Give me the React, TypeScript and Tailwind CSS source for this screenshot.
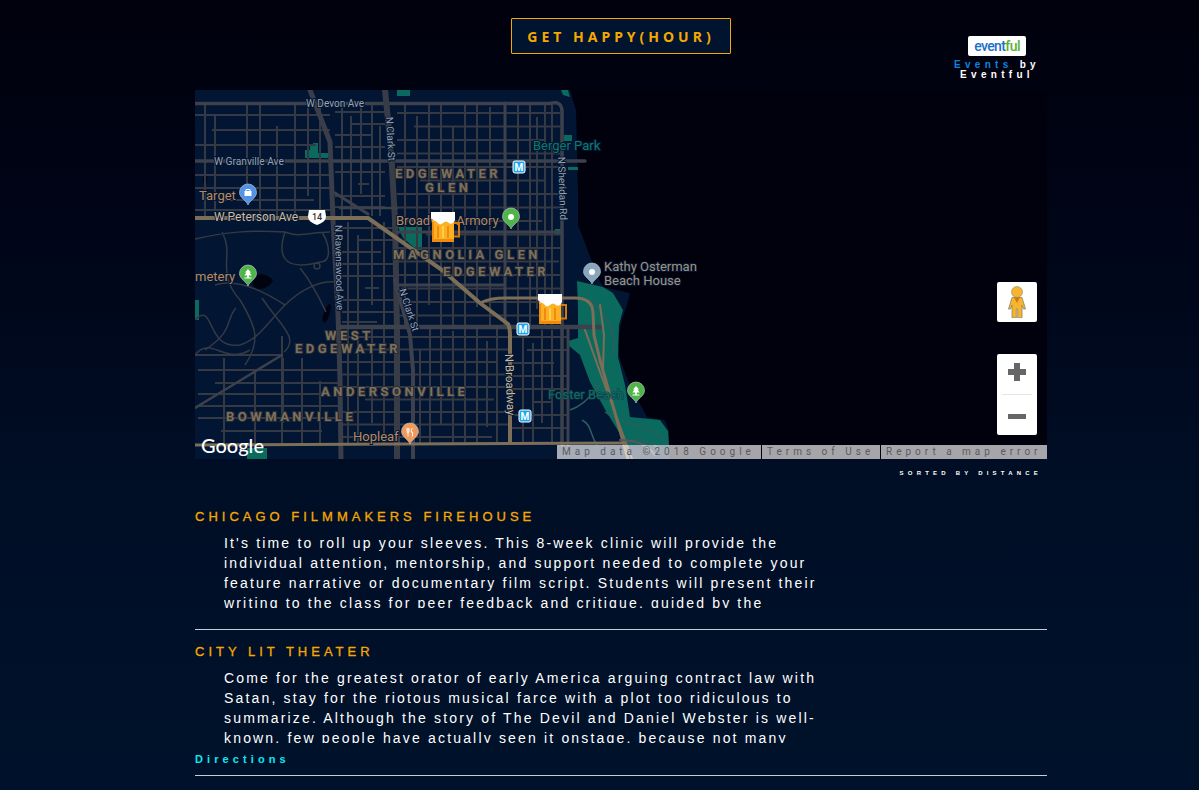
import React from "react";

const LAND = "#021533";
const ROAD = "#343944";
const MAJOR = "#3d414c";
const TAN = "#7d6e57";

function grid(xs: number[], ys: number[], x0: number, x1: number, y0: number, y1: number) {
  let d = "";
  xs.forEach((x, i) => {
    const a = i % 3 === 1 ? y0 + ((i * 13) % 29) : y0;
    const b = i % 4 === 2 ? y1 - ((i * 11) % 23) : y1;
    d += `M${x} ${a}V${b}`;
  });
  ys.forEach((y, j) => {
    const a = j % 4 === 1 ? x0 + ((j * 17) % 31) : x0;
    const b = j % 3 === 2 ? x1 - ((j * 7) % 19) : x1;
    d += `M${a} ${y}H${b}`;
  });
  return d;
}

const range = (a: number, b: number, s: number) => {
  const r: number[] = [];
  for (let v = a; v <= b; v += s) r.push(v);
  return r;
};

const minorPaths = [
  grid([205, 215, 247, 260, 277, 295, 308, 320], [115, 130, 145, 175, 188, 200, 210], 195, 330, 103, 216),
  grid([342, 351, 361, 372, 380], [112, 124, 135, 147, 172, 184, 196, 207], 335, 385, 103, 216),
  grid([405, 417, 429, 441, 453, 465, 477, 490, 518, 530, 537, 545, 552], range(113, 325, 13.5), 397, 560, 103, 327),
  grid([348, 358, 372, 384, 420, 430, 441, 453, 465, 477, 487, 497], range(337, 440, 12.5), 342, 510, 327, 445),
  grid([523, 533, 542, 552], range(337, 440, 13), 510, 568, 330, 445),
  grid([224, 255, 283, 302, 320], [370, 383, 394, 406, 418, 431], 198, 338, 358, 445),
  grid([348, 358, 372, 384], [228, 240, 252, 264, 276, 288, 300, 312, 322], 342, 395, 222, 327),
];

function Label({ x, y, children, size = 12, fill = "#a2927b", weight = 400, ls = 0, rotate, stroke = LAND, sw = 2 }: {
  x: number; y: number; children: React.ReactNode; size?: number; fill?: string; weight?: number; ls?: number; rotate?: number; stroke?: string; sw?: number;
}) {
  return (
    <text
      x={x}
      y={y}
      fontFamily="Roboto, sans-serif"
      fontSize={size}
      fontWeight={weight}
      letterSpacing={ls}
      fill={fill}
      stroke={stroke}
      strokeWidth={sw}
      paintOrder="stroke"
      transform={rotate ? `rotate(${rotate} ${x} ${y})` : undefined}
    >
      {children}
    </text>
  );
}

function Hood({ x, y, children }: { x: number; y: number; children: React.ReactNode }) {
  return <Label x={x} y={y} size={13} weight={700} ls={3.5} fill="#7f7058" stroke="#252b38">{children}</Label>;
}

function Pin({ x, y, fill, children }: { x: number; y: number; fill: string; children?: React.ReactNode }) {
  return (
    <g transform={`translate(${x} ${y})`}>
      <path d="M0 12C-1 8-8.5 5-8.5-.5a8.5 8.5 0 0 1 17 0C8.5 5 1 8 0 12Z" fill={fill} stroke="#b8c0c8" strokeWidth={0.7} />
      {children ?? <circle cx={0} cy={0} r={3} fill="#fff" />}
    </g>
  );
}

const Tree = () => <path d="M0-5 3-1.5H1.6L3.6 1.5H.8V3.5H3.5V4.5H-3.5V3.5H-.8V1.5H-3.6L-1.6-1.5H-3Z" fill="#fff" />;

function Metro({ x, y }: { x: number; y: number }) {
  return (
    <g>
      <rect x={x - 6} y={y - 6} width={12} height={12} rx={2} fill="#1aa7ee" stroke="#fff" strokeWidth={1} />
      <text x={x} y={y + 3.7} textAnchor="middle" fontFamily="Roboto, sans-serif" fontWeight={700} fontSize={10} fill="#fff">M</text>
    </g>
  );
}

function Beer({ x, y }: { x: number; y: number }) {
  return (
    <g transform={`translate(${x} ${y})`}>
      <path d="M23 11H28V24.5H23" fill="none" stroke="#d9780c" strokeWidth={2} />
      <rect x={1} y={8} width={22} height={22} fill="#fdb022" />
      <rect x={1} y={27} width={22} height={3} fill="#f08a10" />
      <rect x={1} y={10} width={2} height={20} fill="#f08a10" />
      <rect x={6} y={14} width={2} height={12} fill="#f08a10" />
      <rect x={11} y={14} width={2} height={12} fill="#ffd04a" />
      <rect x={16} y={14} width={2} height={12} fill="#f08a10" />
      <path d="M0 0H24V8C23 11 20 13 18 11 16 9 14 9 12 11 10 13 8 13 6 10 4 8 2 9 0 6Z" fill="#fff" />
    </g>
  );
}

function MapSvg() {
  return (
    <svg viewBox="195 90 852 369" width={852} height={369} className="block">
      <rect x={195} y={90} width={852} height={369} fill="#01010d" />
      <path
        d="M195 90H570L576 110 577 150 578 190 578 225 582 235 595 270 603 287 630 293 627 305 621 323 618 343 620 360 630 385 647 417 665 420 669 432 669 459H195Z"
        fill={LAND}
      />
      {/* parks */}
      <path
        d="M577 281 603 287 613 293 623 310 619 325 618 357 625 385 630 417 660 420 668 431 669 445 627 445 607 413 590 382 580 355 568 345 568 341 578 338 578 307Z"
        fill="#0a6a5e"
      />
      <path d="M305 158V150H310V146H313V143H318V153H328V158Z" fill="#0a6a5e" />
      <path d="M398 227H422V250L417 250 403 238Z" fill="#0a6a5e" />
      <path d="M397 90H410V96H397ZM561 90H568L570 97 563 95Z M564 135H572V141H564Z M568 167H578V170H568Z M555 229H561V234H555Z M195 300H199V320H195Z" fill="#0a6a5e" />
      <path d="M247 448H267V459H247Z" fill="#0a6a5e" />
      <path d="M203 178C205 173 208 174 207 180 206 186 203 186 203 178Z M252 276C262 272 268 275 273 280 270 288 258 292 253 286Z M328 305C333 300 331 315 326 322 320 325 322 314 328 305Z" fill="#000410" />

      {/* minor streets */}
      <g fill="none" stroke={ROAD} strokeWidth={2}>
        {minorPaths.map((d, i) => <path key={i} d={d} />)}
        {/* cemetery */}
        <path d="M195 239C225 232 250 230 285 232 300 238 310 232 330 232M222 232C235 255 215 272 240 300 255 325 262 340 245 365M285 232C275 262 290 270 320 262 332 262 330 245 322 232M195 320C215 300 205 350 240 345 258 340 268 322 285 305 300 290 320 280 336 282M195 355C210 335 225 365 250 350M262 298C280 325 300 338 284 352M215 285C235 278 262 290 285 305M236 308C225 320 235 330 205 350M300 268C310 280 318 295 326 312" strokeWidth={1.5} />
        <circle cx={317} cy={266} r={3} strokeWidth={1.5} />
        <path d="M195 355H282V358H282M282 336V445" />
        <path d="M590 300C612 320 618 340 612 355M605 412C622 425 650 425 664 440M625 445C640 435 650 440 660 450M582 420C592 425 590 435 597 445M570 410C585 405 590 395 600 385" stroke="#2f5c5e" strokeWidth={1.5} />
      </g>

      {/* arterials */}
      <g fill="none" stroke={MAJOR} strokeLinecap="round" strokeLinejoin="round">
        <path d="M195 103.5 H550Q562 100 562 112V445" strokeWidth={3.5} />
        <path d="M195 161H585" strokeWidth={3.5} />
        <path d="M385 90 391 150 395 220 397 330V459" strokeWidth={6} stroke="#383c47" />
        <path d="M395 280 410 335 413 370V459" strokeWidth={4} />
        <path d="M310 90 330 142 333 220 338 313 340 380 341 459" strokeWidth={5} stroke="#3a3e49" />
        <path d="M335 193 368 214" strokeWidth={3} />
        <path d="M195 408 282 355" strokeWidth={2.5} />
        <path d="M340 327H600" strokeWidth={4.5} />
        <path d="M397 285H505M397 232H560M505 103V325M568 327V445" strokeWidth={3} />
        <path d="M340 208H397" strokeWidth={2.5} />
      </g>
      <g fill="none" stroke={TAN} strokeLinecap="round" strokeLinejoin="round">
        <path d="M195 218H368L442 270 480 303 508 324Q510 328 510 335V443" strokeWidth={4} />
        <path d="M480 303Q490 298 505 298H575Q592 298 593 312L594 335 600 360 628 459" strokeWidth={3} />
        <path d="M585 330 600 372 632 459M600 305 604 335 603 370" strokeWidth={2} />
        <path d="M195 445 400 444 625 443" strokeWidth={3} />
        <path d="M620 440C640 440 650 448 655 455" strokeWidth={2} stroke="#54585e" />
      </g>

      {/* labels */}
      <Label x={306} y={107} size={10} fill="#9aa2ac">W Devon Ave</Label>
      <Label x={386} y={117} size={10} fill="#9aa2ac" rotate={87}>N Clark St</Label>
      <Label x={533} y={150} size={13} fill="#0b7a6c">Berger Park</Label>
      <Hood x={395} y={178}>EDGEWATER</Hood>
      <Hood x={425} y={192}>GLEN</Hood>
      <Label x={558} y={157} size={10} fill="#9aa2ac" rotate={88}>N Sheridan Rd</Label>
      <Label x={214} y={165} size={10.2} fill="#9aa2ac">W Granville Ave</Label>
      <Label x={199} y={200} size={13} fill="#b68a5e">Target</Label>
      <Label x={214} y={221} size={12} fill="#cdbb9e">W Peterson Ave</Label>
      <Label x={335} y={225} size={10} fill="#9aa2ac" rotate={89}>N Ravenswood Ave</Label>
      <Label x={396} y={225} size={13} fill="#b68a5e">Broadway Armory</Label>
      <Hood x={393} y={259}>MAGNOLIA GLEN</Hood>
      <Hood x={443} y={276}>EDGEWATER</Hood>
      <Label x={604} y={271} size={13} fill="#a2927b">Kathy Osterman</Label>
      <Label x={604} y={285} size={13} fill="#a2927b">Beach House</Label>
      <Label x={195} y={281} size={13} fill="#b68a5e">metery</Label>
      <Label x={399} y={290} size={10} fill="#9aa2ac" rotate={72}>N Clark St</Label>
      <Hood x={325} y={340}>WEST</Hood>
      <Hood x={295} y={353}>EDGEWATER</Hood>
      <Hood x={321} y={396}>ANDERSONVILLE</Hood>
      <Hood x={226} y={421}>BOWMANVILLE</Hood>
      <Label x={353} y={441} size={13} fill="#b68a5e">Hopleaf</Label>
      <Label x={505} y={354} size={11.5} fill="#cdbb9e" rotate={88}>N Broadway</Label>
      <Label x={548} y={399} size={13} fill="#136a62" stroke="#0d3a44" sw={1}>Foster Beach</Label>

      {/* shield */}
      <path d="M309 210H325L326 216C326 221 322 223 317 225 312 223 308 221 308 216Z" fill="#fff" />
      <text x={317} y={220} textAnchor="middle" fontFamily="Roboto, sans-serif" fontSize={9} fontWeight={500} fill="#333">14</text>

      <Pin x={248} y={193} fill="#4f94e8">
        <path d="M-3.5-2H3.5V3H-3.5Z" fill="#fff" />
        <path d="M-2-2V-3.5H2V-2" fill="none" stroke="#fff" strokeWidth={1} />
      </Pin>
      <Pin x={511} y={217} fill="#4fb548" />
      <Pin x={592} y={272} fill="#8aa6bc" />
      <Pin x={248} y={274} fill="#4fb548"><Tree /></Pin>
      <Pin x={636} y={391} fill="#4fb548"><Tree /></Pin>
      <Pin x={410} y={432} fill="#f29a5c">
        <path d="M-3-4V-.5Q-3 1-2 1V4.5M-2-4V1M-1-4V-.5Q-1 1-2 1M2.5-4Q1.2-3 1.2 0H2.5V4.5" fill="none" stroke="#fff" strokeWidth={0.9} />
      </Pin>

      <Metro x={519} y={167} />
      <Metro x={523} y={329} />
      <Metro x={525} y={416} />

      <Beer x={431} y={212} />
      <Beer x={538} y={294} />
    </svg>
  );
}

function Pegman() {
  return (
    <svg width={24} height={32} viewBox="0 0 24 32">
      <circle cx={12} cy={6} r={5.5} fill="#f5b52e" stroke="#8f8466" strokeWidth={0.6} />
      <path d="M7 11.5H17L20.5 23H18.5L17 19V32H12.7V23H11.3V32H7V19L5.5 23H3.5Z" fill="#f5b52e" stroke="#8f8466" strokeWidth={0.8} />
      <path d="M9 11.5H15L12 17Z" fill="#d9741c" />
    </svg>
  );
}

function MapPanel() {
  return (
    <div className="relative w-[852px] h-[369px] overflow-hidden">
      <MapSvg />
      <div className="absolute left-[6px] bottom-[2px] text-white text-[20px] font-medium leading-[24px] font-['Lato',sans-serif]">Google</div>
      <div className="absolute left-[802px] top-[192px] w-[40px] h-[40px] bg-white rounded-[2px] flex items-center justify-center">
        <Pegman />
      </div>
      <div className="absolute left-[802px] top-[264px] w-[40px] h-[81px] bg-white rounded-[2px] flex flex-col items-center">
        <div className="h-[36px] mb-[4px] flex items-center justify-center">
          <div className="relative w-[18px] h-[18px]">
            <div className="absolute left-0 top-[6px] w-[18px] h-[6px] bg-[#666]" />
            <div className="absolute left-[6px] top-0 w-[6px] h-[18px] bg-[#666]" />
          </div>
        </div>
        <div className="w-[30px] h-px bg-[#e6e6e6]" />
        <div className="h-[40px] pt-[3px] flex items-center justify-center">
          <div className="w-[18px] h-[5px] bg-[#666]" />
        </div>
      </div>
      <div className="absolute right-0 bottom-0 flex gap-px h-[14px] text-[10px] leading-[14px] tracking-[4px] text-[#5a5a5e] font-['Roboto',sans-serif]">
        <div className="w-[204px] pl-[5px] bg-white/65 whitespace-nowrap overflow-hidden">Map data ©2018 Google</div>
        <div className="w-[118px] pl-[5px] bg-white/65 whitespace-nowrap overflow-hidden">Terms of Use</div>
        <div className="w-[166px] pl-[5px] bg-white/65 whitespace-nowrap overflow-hidden">Report a map error</div>
      </div>
    </div>
  );
}

function Venue({ name, text, directions }: { name: string; text: string; directions?: boolean }) {
  return (
    <section>
      <h2 className="text-[13px] leading-[15px] font-normal tracking-[4px] text-[#f7a800] [-webkit-text-stroke:0.3px_#f7a800]">{name}</h2>
      <p className="ml-[29px] w-[600px] h-[75px] mt-[9px] overflow-hidden text-[14px] leading-[20px] tracking-[2.17px] text-white">{text}</p>
      {directions && (
        <div className="mt-[10px] text-[11px] leading-[13px] font-bold tracking-[4.1px] text-[#0be8f4]">Directions</div>
      )}
    </section>
  );
}

export default function App() {
  return (
    <div className="h-[790px] overflow-hidden bg-linear-to-b from-[#00010c] via-[#000e25] via-60% to-[#00122b] font-['Liberation_Sans',Arial,sans-serif]">
      <div className="ml-[195px] w-[852px]">
        <header className="grid grid-cols-[1fr_220px_1fr] h-[90px]">
          <div />
          <div className="pt-[18px]">
            <div className="h-[36px] pt-[1px] border border-[#f5a800] rounded-[1px] bg-[#001430] flex items-center justify-center text-[14px] font-bold tracking-[4px] text-[#f7a800] font-['Noto_Sans',sans-serif]">
              GET HAPPY(HOUR)
            </div>
          </div>
          <div className="flex justify-end pr-[4px] pt-[36px]">
            <div className="flex flex-col items-center w-[92px]">
              <div className="w-[58px] h-[20px] rounded-[2px] bg-white flex items-center justify-center text-[14px] leading-[20px] tracking-[-0.6px] font-['Roboto',sans-serif] font-medium">
                <span className="text-[#1a6fc9]">event</span><span className="text-[#5db030]">ful</span>
              </div>
              <div className="text-center whitespace-nowrap text-[10px] leading-[10px] mt-[4px] tracking-[4.3px] text-white font-bold">
                <span className="text-[#0a84e0]">Events</span> by<br />Eventful
              </div>
            </div>
          </div>
        </header>
        <MapPanel />
        <div className="h-[50px] pt-[11px] flex justify-end pr-[5px]">
          <span className="text-[6px] leading-[7px] font-bold tracking-[4.2px] text-white">SORTED BY DISTANCE</span>
        </div>
        <Venue
          name="CHICAGO FILMMAKERS FIREHOUSE"
          text="It's time to roll up your sleeves. This 8-week clinic will provide the individual attention, mentorship, and support needed to complete your feature narrative or documentary film script. Students will present their writing to the class for peer feedback and critique, guided by the"
        />
        <div className="h-px bg-[#c8ccd4] mt-[21px] mb-[14px]" />
        <Venue
          directions
          name="CITY LIT THEATER"
          text="Come for the greatest orator of early America arguing contract law with Satan, stay for the riotous musical farce with a plot too ridiculous to summarize. Although the story of The Devil and Daniel Webster is well-known, few people have actually seen it onstage, because not many"
        />
        <div className="h-px bg-[#c8ccd4] mt-[9px]" />
      </div>
    </div>
  );
}
